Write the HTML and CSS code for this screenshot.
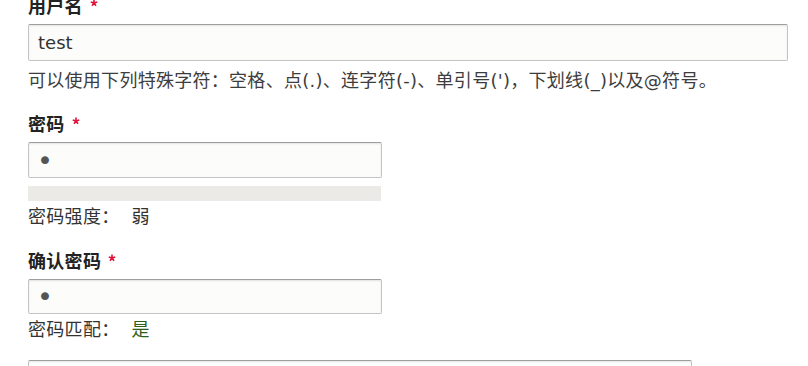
FILE: index.html
```html
<!DOCTYPE html>
<html lang="zh-CN">
<head>
<meta charset="utf-8">
<title>用户注册</title>
<link rel="stylesheet" href="styles.css">
</head>
<body>
<form class="form">
  <div class="field field-first">
    <label class="field-label">用户名<svg class="req" viewBox="0 0 16 16" aria-hidden="true"><path d="M8 1.2V8M8 8l6.5-2.1M8 8l4 5.5M8 8l-4 5.5M8 8L1.5 5.9"/></svg></label>
    <input class="text-input wide" type="text" value="test">
    <div class="description">可以使用下列特殊字符：空格、点(.)、连字符(-)、单引号(')，下划线(_)以及@符号。</div>
  </div>

  <div class="field field-pass">
    <label class="field-label">密码<svg class="req" viewBox="0 0 16 16" aria-hidden="true"><path d="M8 1.2V8M8 8l6.5-2.1M8 8l4 5.5M8 8l-4 5.5M8 8L1.5 5.9"/></svg></label>
    <input class="text-input narrow pass-input" type="password" value="a">
    <div class="meter"></div>
    <div class="status">密码强度：<span class="status-value">弱</span></div>
  </div>

  <div class="field field-confirm">
    <label class="field-label">确认密码<svg class="req" viewBox="0 0 16 16" aria-hidden="true"><path d="M8 1.2V8M8 8l6.5-2.1M8 8l4 5.5M8 8l-4 5.5M8 8L1.5 5.9"/></svg></label>
    <input class="text-input narrow pass-input confirm-input" type="password" value="a">
    <div class="status">密码匹配：<span class="status-value ok">是</span></div>
  </div>

  <div class="field field-next">
    <input class="text-input medium" type="text" value="">
  </div>
</form>
</body>
</html>
```

FILE: styles.css
```css
html, body {
  margin: 0;
  padding: 0;
  background: #ffffff;
  overflow: hidden;
}

body {
  font-family: "DejaVu Sans", "Noto Sans CJK SC", sans-serif;
  font-size: 18px;
  line-height: 24px;
  color: #333333;
}

.form {
  padding-left: 28px;
  margin-top: -5px;
}

.field {
  display: flex;
  flex-direction: column;
  align-items: flex-start;
}

.field-pass {
  margin-top: 20px;
}

.field-confirm {
  margin-top: 21px;
}

.field-next {
  margin-top: 18px;
}

.field-label {
  display: block;
  font-weight: bold;
  color: #222222;
  margin-bottom: 5px;
  letter-spacing: 0.3px;
}

.req {
  display: inline-block;
  width: 8px;
  height: 8px;
  margin: 4px 0 0 7px;
  vertical-align: top;
  fill: none;
  stroke: #e0123a;
  stroke-width: 3.2;
  stroke-linecap: butt;
}

.text-input {
  box-sizing: border-box;
  height: 36px;
  padding: 0 9px;
  margin: 0;
  font: inherit;
  font-size: 18px;
  color: #333333;
  background: #fcfcfa;
  border: 1px solid #c4c4c4;
  border-top-color: #9e9e9e;
  border-radius: 2px;
  box-shadow: inset 0 1px 2px rgba(0, 0, 0, 0.1);
  outline: none;
}

.wide {
  width: 760px;
  height: 37px;
}

.narrow {
  width: 354px;
}

.pass-input {
  font-size: 27px;
  color: #555555;
  padding-left: 8px;
}

.confirm-input {
  height: 35px;
}

.medium {
  width: 664px;
  background: #ffffff;
}

.description {
  margin-top: 8px;
  color: #3d3d3d;
  letter-spacing: 0.28px;
}

.meter {
  width: 353px;
  height: 15px;
  margin-top: 8px;
  background: #ebeae6;
}

.status {
  margin-top: 4px;
  color: #333333;
  letter-spacing: 0.3px;
}

.status-value {
  margin-left: 12px;
}

.ok {
  color: #325e1c;
}
```
